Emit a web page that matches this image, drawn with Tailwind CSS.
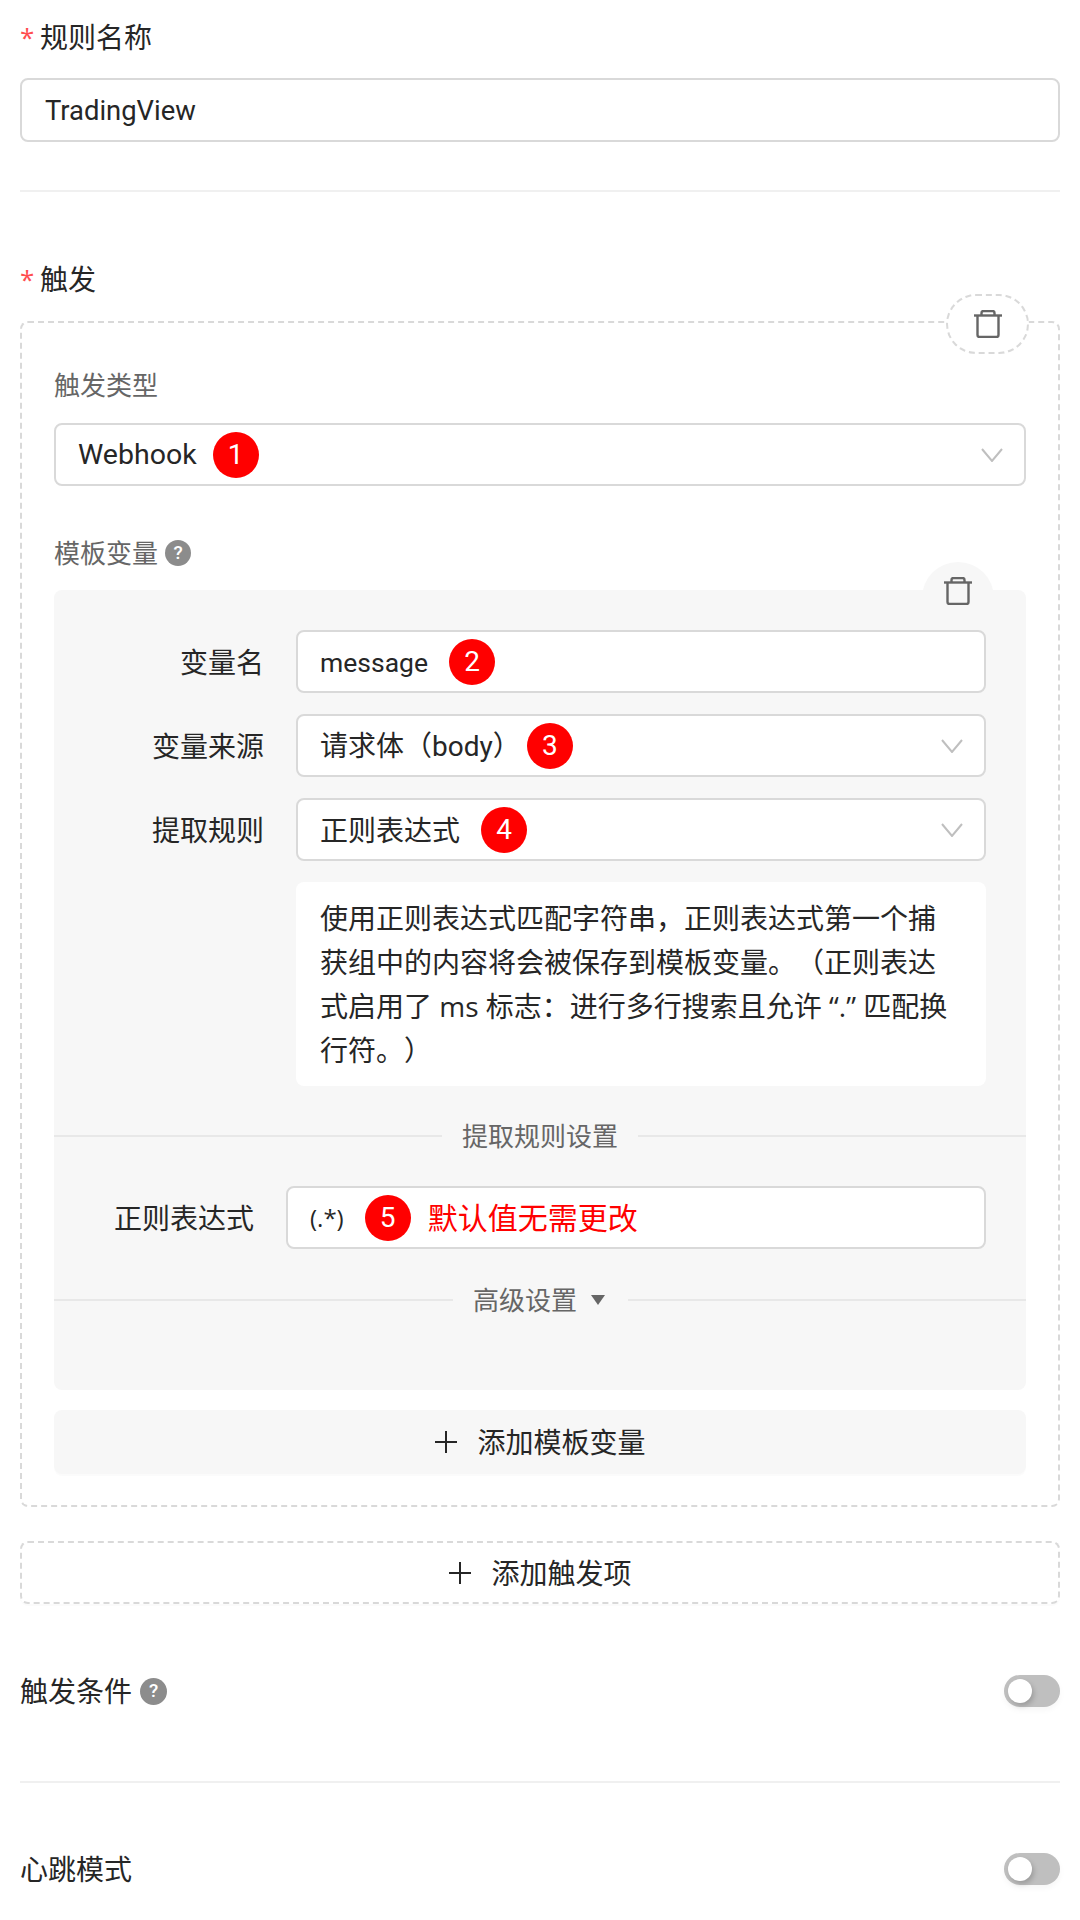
<!DOCTYPE html>
<html lang="zh-CN">
<head>
    <meta charset="UTF-8">
    <meta name="viewport" content="width=device-width, initial-scale=1.0">
    <title>规则编辑</title>
    <script src="https://cdn.jsdelivr.net/npm/@tailwindcss/browser@4"></script>
</head>
<body class="bg-white text-[#262626] text-[28px] [text-spacing-trim:space-all] font-['Open_Sans','Noto_Sans_CJK_SC',sans-serif]">
    <div class="w-[1080px] h-[1920px] overflow-hidden px-5 flex flex-col">

        <!-- rule name -->
        <div class="h-[74px] mb-1 flex items-center">
            <span class="text-[#ff4d4f] w-5 text-[26px] leading-none">*</span>
            <span>规则名称</span>
        </div>
        <div class="h-[64px] border-2 border-[#d9d9d9] rounded-lg flex items-center pl-[23px]">
            <span><span class="font-['Roboto'] text-[27.4px]">TradingView</span></span>
        </div>
        <div class="mt-12 h-[2px] bg-[#f0f0f0]"></div>

        <!-- trigger -->
        <div class="mt-[66px] h-[42px] mb-[21px] flex items-center">
            <span class="text-[#ff4d4f] w-5 text-[26px] leading-none">*</span>
            <span>触发</span>
        </div>
        <div class="relative h-[1186px] border-2 border-dashed border-[#d9d9d9] rounded-lg px-8 pt-[42px]">
            <div class="absolute right-[29px] top-[-29px] w-[83px] h-[60px] bg-white border-2 border-dashed border-[#d9d9d9] rounded-[30px] flex items-center justify-center">
                <svg class="w-7 h-7 text-[#666]" viewBox="0 0 28 28" fill="none" stroke="currentColor" stroke-width="2.4"><path d="M0 5.5H28"/><path d="M7.5 5.5V3a2 2 0 0 1 2-2h9a2 2 0 0 1 2 2v2.5"/><path d="M3.5 5.5V25a2 2 0 0 0 2 2h17a2 2 0 0 0 2-2V5.5"/></svg>
            </div>

            <div class="h-10 flex items-center text-[26px] text-[#666]">触发类型</div>
            <div class="mt-[18px] h-[63px] border-2 border-[#d9d9d9] rounded-lg flex items-center pl-[22px] pr-[21px]">
                <span><span class="font-['Roboto'] text-[28.5px]">Webhook</span></span>
                <span class="ml-4 w-[46px] h-[46px] rounded-full bg-[#ff0000] text-white flex items-center justify-center font-['Roboto'] text-[28px]">1</span>
                <svg class="ml-auto w-[22px] h-[14px]" viewBox="0 0 22 14" fill="none" stroke="#bfbfbf" stroke-width="2"><path d="M1 1l10 12L21 1"/></svg>
            </div>

            <div class="mt-[47px] h-10 flex items-center text-[26px] text-[#666]">
                <span>模板变量</span>
                <span class="ml-[7px] w-[26px] h-[26px] rounded-full bg-[#8c8c8c] text-white font-['Roboto'] text-[19px] font-medium flex items-center justify-center">?</span>
            </div>

            <!-- template variable panel -->
            <div class="relative mt-[17px] h-[800px] bg-[#f7f7f7] rounded-lg pt-10 flex flex-col">
                <div class="absolute right-[32px] top-[-28px] w-[72px] h-[56px] bg-[#f7f7f7] rounded-t-[36px] flex items-center justify-center pt-[2px]">
                    <svg class="w-7 h-7 text-[#666]" viewBox="0 0 28 28" fill="none" stroke="currentColor" stroke-width="2.4"><path d="M0 5.5H28"/><path d="M7.5 5.5V3a2 2 0 0 1 2-2h9a2 2 0 0 1 2 2v2.5"/><path d="M3.5 5.5V25a2 2 0 0 0 2 2h17a2 2 0 0 0 2-2V5.5"/></svg>
                </div>

                <div class="flex flex-col gap-[21px] pr-10">
                    <div class="flex items-center">
                        <div class="w-[210px] mr-[32px] text-right">变量名</div>
                        <div class="flex-1 h-[63px] bg-white border-2 border-[#d9d9d9] rounded-lg flex items-center pl-[22px] pr-[21px]">
                            <span><span class="font-['Roboto'] text-[26.5px]">message</span></span>
                            <span class="ml-[21px] w-[46px] h-[46px] rounded-full bg-[#ff0000] text-white flex items-center justify-center font-['Roboto'] text-[28px]">2</span>
                        </div>
                    </div>
                    <div class="flex items-center">
                        <div class="w-[210px] mr-[32px] text-right">变量来源</div>
                        <div class="flex-1 h-[63px] bg-white border-2 border-[#d9d9d9] rounded-lg flex items-center pl-[22px] pr-[21px]">
                            <span>请求体（<span class="font-['Roboto']">body</span>）</span>
                            <span class="ml-[6px] w-[46px] h-[46px] rounded-full bg-[#ff0000] text-white flex items-center justify-center font-['Roboto'] text-[28px]">3</span>
                            <svg class="ml-auto w-[22px] h-[14px]" viewBox="0 0 22 14" fill="none" stroke="#bfbfbf" stroke-width="2"><path d="M1 1l10 12L21 1"/></svg>
                        </div>
                    </div>
                    <div class="flex items-center">
                        <div class="w-[210px] mr-[32px] text-right">提取规则</div>
                        <div class="flex-1 h-[63px] bg-white border-2 border-[#d9d9d9] rounded-lg flex items-center pl-[22px] pr-[21px]">
                            <span>正则表达式</span>
                            <span class="ml-[21px] w-[46px] h-[46px] rounded-full bg-[#ff0000] text-white flex items-center justify-center font-['Roboto'] text-[28px]">4</span>
                            <svg class="ml-auto w-[22px] h-[14px]" viewBox="0 0 22 14" fill="none" stroke="#bfbfbf" stroke-width="2"><path d="M1 1l10 12L21 1"/></svg>
                        </div>
                    </div>
                    <div class="ml-[242px] h-[204px] bg-white rounded-lg px-[24px] py-[14px] leading-[44px]">使用正则表达式匹配字符串，正则表达式第一个捕获组中的内容将会被保存到模板变量。（正则表达式启用了 ms 标志：进行多行搜索且允许 “.” 匹配换行符。）</div>
                </div>

                <div class="mt-[30px] h-10 flex items-center text-[26px] text-[#666]">
                    <div class="w-[388px] h-[2px] bg-[#e8e8e8]"></div>
                    <span class="mx-5">提取规则设置</span>
                    <div class="flex-1 h-[2px] bg-[#e8e8e8]"></div>
                </div>

                <div class="mt-[30px] pr-10 flex items-center">
                    <div class="w-[200px] mr-[32px] text-right">正则表达式</div>
                    <div class="flex-1 h-[63px] bg-white border-2 border-[#d9d9d9] rounded-lg flex items-center pl-[22px] pr-[21px]">
                        <span class="text-[24px]">(.*)</span>
                        <span class="ml-[21px] w-[46px] h-[46px] rounded-full bg-[#ff0000] text-white flex items-center justify-center font-['Roboto'] text-[28px]">5</span>
                        <span class="ml-[17px] text-[30px] text-[#ff0000]">默认值无需更改</span>
                    </div>
                </div>

                <div class="mt-[31px] h-10 flex items-center text-[26px] text-[#666]">
                    <div class="w-[399px] h-[2px] bg-[#e8e8e8]"></div>
                    <span class="ml-5">高级设置</span>
                    <span class="ml-[14px] w-0 h-0 border-x-[7px] border-x-transparent border-t-[10px] border-t-[#666]"></span>
                    <div class="ml-[23px] flex-1 h-[2px] bg-[#e8e8e8]"></div>
                </div>
            </div>

            <div class="mt-5 h-[64px] bg-[#f7f7f7] rounded-lg shadow-[0_2px_0_rgba(0,0,0,0.015)] flex items-center justify-center gap-[19px]">
                <svg class="w-6 h-6" viewBox="0 0 24 24" fill="none" stroke="#262626" stroke-width="2"><path d="M12 1V23M1 12H23"/></svg>
                <span>添加模板变量</span>
            </div>
        </div>

        <div class="mt-[34px] h-[63px] border-2 border-dashed border-[#d9d9d9] rounded-lg shadow-[0_2px_0_rgba(0,0,0,0.015)] flex items-center justify-center gap-[19px]">
            <svg class="w-6 h-6" viewBox="0 0 24 24" fill="none" stroke="#262626" stroke-width="2"><path d="M12 1V23M1 12H23"/></svg>
            <span>添加触发项</span>
        </div>

        <!-- toggles -->
        <div class="mt-[71px] h-8 flex items-center">
            <span>触发条件</span>
            <span class="ml-2 w-[27px] h-[27px] rounded-full bg-[#8c8c8c] text-white font-['Roboto'] text-[19px] font-medium flex items-center justify-center">?</span>
            <div class="ml-auto w-14 h-8 rounded-full bg-[#bfbfbf] p-1 shadow-[0_3px_6px_rgba(0,0,0,0.04)]">
                <div class="w-6 h-6 rounded-full bg-white shadow-[2px_3px_5px_rgba(0,0,0,0.18)]"></div>
            </div>
        </div>
        <div class="mt-[74px] h-[2px] bg-[#f0f0f0]"></div>
        <div class="mt-[70px] h-8 flex items-center">
            <span>心跳模式</span>
            <div class="ml-auto w-14 h-8 rounded-full bg-[#bfbfbf] p-1 shadow-[0_3px_6px_rgba(0,0,0,0.04)]">
                <div class="w-6 h-6 rounded-full bg-white shadow-[2px_3px_5px_rgba(0,0,0,0.18)]"></div>
            </div>
        </div>
    </div>
</body>
</html>
